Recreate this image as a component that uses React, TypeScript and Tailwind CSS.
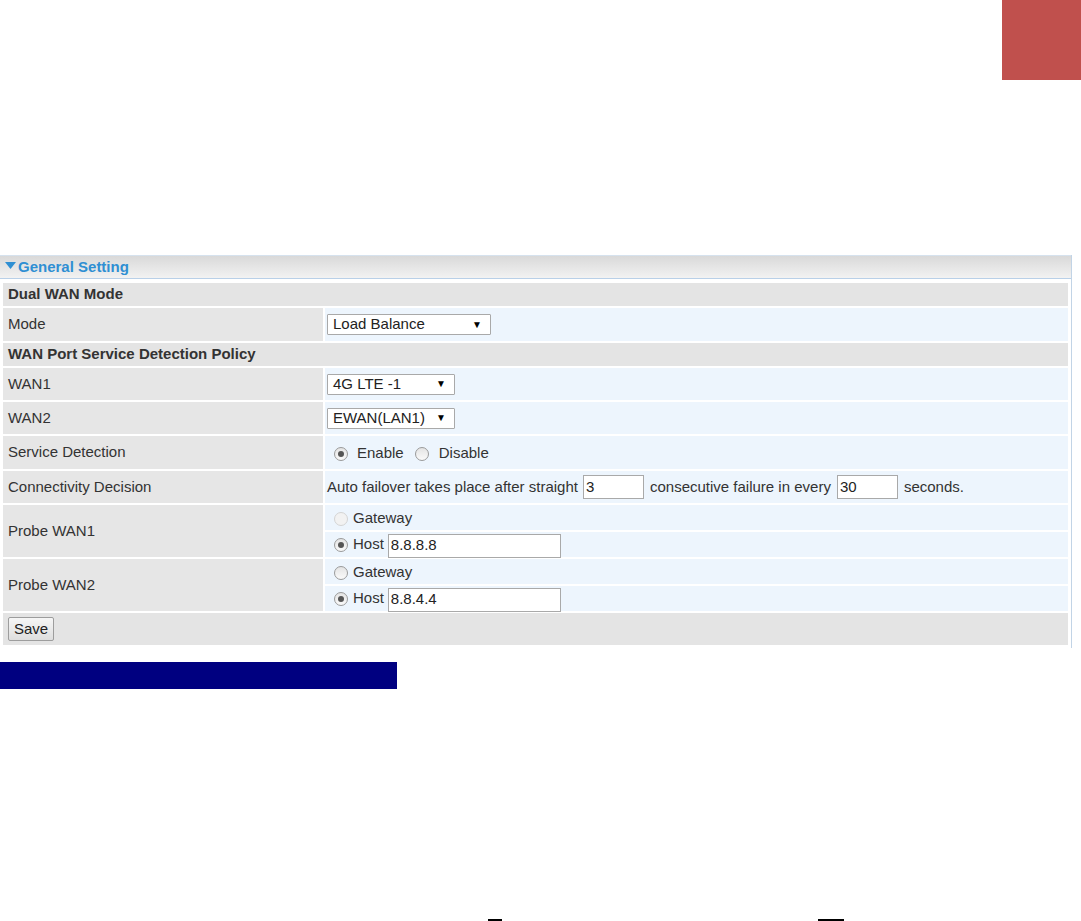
import React from "react"

const font = { fontFamily: '"Liberation Sans", Arial, sans-serif' }

function Radio({ checked = false, disabled = false }: { checked?: boolean; disabled?: boolean }) {
  return (
    <span
      className={`inline-flex h-[14px] w-[14px] shrink-0 items-center justify-center rounded-full border ${
        disabled ? "border-[#d4d4d4] bg-[#f2f2f2]" : "border-[#9a9a9a] bg-gradient-to-b from-[#e4e4e4] to-[#fafafa]"
      }`}
    >
      {checked && <span className="h-[6px] w-[6px] rounded-full bg-[#555]" />}
    </span>
  )
}

function Select({ value, width }: { value: string; width: string }) {
  return (
    <div
      className={`flex h-[21px] items-center justify-between rounded-[1px] border border-[#a9a9a9] bg-white pl-[5px] pr-[8px] text-[15px] text-[#222] ${width}`}
    >
      <span>{value}</span>
      <span className="text-[10px] leading-none text-black">▼</span>
    </div>
  )
}

function TextBox({ value, width }: { value: string; width: string }) {
  return (
    <div className={`flex h-[24px] items-center border border-[#a9a9a9] bg-white pl-[2px] text-[15px] text-[#222] ${width}`}>
      {value}
    </div>
  )
}

function Section({ title }: { title: string }) {
  return (
    <div className="flex h-[23px] items-center bg-[#e4e4e4] pl-[5px] text-[15px] font-bold text-[#333]">
      {title}
    </div>
  )
}

function Row({ label, height, children }: { label: string; height: string; children: React.ReactNode }) {
  return (
    <div className={`flex gap-[2px] ${height}`}>
      <div className="flex w-[320px] shrink-0 items-center bg-[#e6e6e6] pl-[5px] text-[15px] text-[#333]">{label}</div>
      <div className="flex flex-1 items-center bg-[#edf5fd] pl-[2px] text-[15px] text-[#333]">{children}</div>
    </div>
  )
}

function ProbeRow({ label, host, gatewayDisabled }: { label: string; host: string; gatewayDisabled?: boolean }) {
  return (
    <div className="flex h-[52px] gap-[2px]">
      <div className="flex w-[320px] shrink-0 items-center bg-[#e6e6e6] pl-[5px] text-[15px] text-[#333]">{label}</div>
      <div className="flex flex-1 flex-col gap-[2px]">
        <div className="flex h-[25px] items-center gap-[5px] bg-[#edf5fd] pl-[9px] pt-[2px] text-[15px] text-[#333]">
          <Radio disabled={gatewayDisabled} />
          <span>Gateway</span>
        </div>
        <div className="flex h-[25px] items-center gap-[5px] bg-[#edf5fd] pl-[9px] text-[15px] text-[#333]">
          <Radio checked />
          <span>Host</span>
          <div className="-ml-[1px] mt-[2px]">
            <TextBox value={host} width="w-[173px]" />
          </div>
        </div>
      </div>
    </div>
  )
}

export default function App() {
  return (
    <div className="relative h-[921px] w-[1081px] overflow-hidden bg-white" style={font}>
      <div className="flex h-[80px] justify-end">
        <div className="h-[80px] w-[79px] bg-[#c0504d]" />
      </div>

      <div className="mt-[175px] w-[1072px] border-r border-[#c2d4e6]">
        <div className="flex h-[24px] items-center border-y border-[#b9d0e8] border-t-[#d6e2ee] bg-gradient-to-b from-[#d9d9d9] to-[#f2f2f2] pl-[5px] text-[15px] font-bold text-[#2f8fd3]">
          <svg width="11" height="7" viewBox="0 0 11 7" className="mr-[2px] mb-[3px]">
            <path d="M0 0h11L5.5 7z" fill="#2f8fd3" />
          </svg>
          General Setting
        </div>
        <div className="flex flex-col gap-[2px] px-[3px] pt-[4px] pb-[3px]">
          <Section title="Dual WAN Mode" />
          <Row label="Mode" height="h-[33px]">
            <Select value="Load Balance" width="w-[164px]" />
          </Row>
          <Section title="WAN Port Service Detection Policy" />
          <Row label="WAN1" height="h-[32px]">
            <Select value="4G LTE -1" width="w-[128px]" />
          </Row>
          <Row label="WAN2" height="h-[32px]">
            <Select value="EWAN(LAN1)" width="w-[128px]" />
          </Row>
          <Row label="Service Detection" height="h-[33px]">
            <div className="flex items-center pl-[7px] pt-[2px]">
              <Radio checked />
              <span className="ml-[9px]">Enable</span>
              <span className="ml-[11px] flex"><Radio /></span>
              <span className="ml-[10px]">Disable</span>
            </div>
          </Row>
          <Row label="Connectivity Decision" height="h-[32px]">
            <span>Auto failover takes place after straight</span>
            <span className="ml-[5px]"><TextBox value="3" width="w-[61px]" /></span>
            <span className="ml-[6px]">consecutive failure in every</span>
            <span className="ml-[6px]"><TextBox value="30" width="w-[61px]" /></span>
            <span className="ml-[6px]">seconds.</span>
          </Row>
          <ProbeRow label="Probe WAN1" host="8.8.8.8" gatewayDisabled />
          <ProbeRow label="Probe WAN2" host="8.8.4.4" />
          <div className="flex h-[32px] items-center bg-[#e4e4e4] pl-[5px]">
            <button className="h-[24px] rounded-[2px] border border-[#9d9d9d] bg-gradient-to-b from-[#f6f6f6] to-[#dedede] px-[5px] text-[15px] text-[#222]">
              Save
            </button>
          </div>
        </div>
      </div>

      <div className="mt-[14px] h-[27px] w-[397px] bg-[#000080]" />

      <div className="mt-[230px] flex h-[2px]">
        <div className="ml-[488px] h-[2px] w-[14px] bg-black" />
        <div className="ml-[316px] h-[2px] w-[26px] bg-black" />
      </div>
    </div>
  )
}
